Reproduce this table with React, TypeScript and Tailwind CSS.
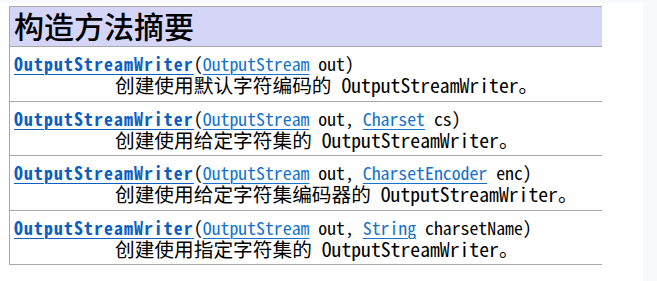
import React from 'react';

const MONO = '"Noto Sans Mono CJK SC", "DejaVu Sans Mono", monospace';

type Param = { type: string; name: string };

const constructors: { params: Param[]; desc: string; height: string }[] = [
  { params: [{ type: 'OutputStream', name: 'out' }], desc: '创建使用默认字符编码的', height: 'h-[55px]' },
  {
    params: [
      { type: 'OutputStream', name: 'out' },
      { type: 'Charset', name: 'cs' },
    ],
    desc: '创建使用给定字符集的',
    height: 'h-[54px]',
  },
  {
    params: [
      { type: 'OutputStream', name: 'out' },
      { type: 'CharsetEncoder', name: 'enc' },
    ],
    desc: '创建使用给定字符集编码器的',
    height: 'h-[55px]',
  },
  {
    params: [
      { type: 'OutputStream', name: 'out' },
      { type: 'String', name: 'charsetName' },
    ],
    desc: '创建使用指定字符集的',
    height: 'h-[54px]',
  },
];

function Link({ children, bold }: { children: React.ReactNode; bold?: boolean }) {
  return (
    <a
      href="#"
      className={
        bold
          ? 'text-[#0a5fbf] font-bold tracking-[1.1px] underline decoration-1 underline-offset-[3px]'
          : 'text-[#1272cc] underline decoration-1 underline-offset-[3px]'
      }
    >
      {children}
    </a>
  );
}

export default function App() {
  return (
    <div className="h-[281px] w-[657px] bg-[#f8f9fa] overflow-hidden">
      <div className="mt-[3px] h-[278px] w-[643px] bg-white pt-[3px] pl-[9px]">
        <div className="w-[593px] border-l border-b border-[#a9a9a9]">
          <div className="h-[40px] border-t border-[#a9a9a9] bg-[#d5d5f7] pl-[4px]">
            <h2
              className="text-[30px] leading-[37px] font-medium text-black"
              style={{ fontFamily: '"Noto Sans CJK SC", sans-serif' }}
            >
              构造方法摘要
            </h2>
          </div>
          {constructors.map((c, i) => (
            <div key={i} className={`${c.height} border-t border-[#a9a9a9] pl-[4px] pt-[6px]`} style={{ fontFamily: MONO }}>
              <div className="text-[17.8px] leading-[21px] text-black whitespace-pre">
                <Link bold>OutputStreamWriter</Link>(
                {c.params.map((p, j) => (
                  <React.Fragment key={j}>
                    {j > 0 ? ', ' : ''}
                    <Link>{p.type}</Link> {p.name}
                  </React.Fragment>
                ))}
                )
              </div>
              <div className="pl-[101px] text-[19.7px] leading-[21px] text-black whitespace-pre">
                {c.desc} OutputStreamWriter。
              </div>
            </div>
          ))}
        </div>
      </div>
    </div>
  );
}
